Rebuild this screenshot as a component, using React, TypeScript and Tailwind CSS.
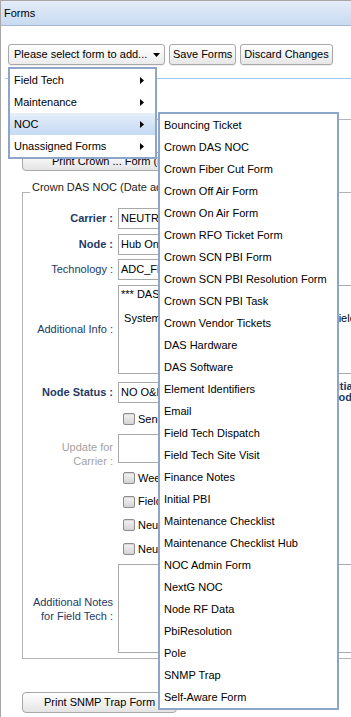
import React from "react";

const FONT = "font-['Liberation_Sans',Arial,Helvetica,sans-serif]";
const LABEL = "text-[#1e3a64]";

function Btn({ children }: { children: React.ReactNode }) {
  return (
    <div className="flex h-[21px] items-center whitespace-nowrap rounded-[3px] border border-[#a8a8a8] bg-gradient-to-b from-white to-[#e6e6e6] px-[3px] shadow-[0_1px_1px_rgba(0,0,0,0.08)]">
      {children}
    </div>
  );
}

function RightTri() {
  return (
    <svg width="4" height="7" viewBox="0 0 4 7" className="block">
      <path d="M0 0 L4 3.5 L0 7 Z" fill="#000" />
    </svg>
  );
}

function Check() {
  return (
    <div className="h-[12px] w-[12px] shrink-0 rounded-[2px] border border-[#8c8c8c] bg-gradient-to-b from-[#f4f4f4] to-[#d4d4d4] shadow-[inset_0_1px_1px_rgba(0,0,0,0.12)]" />
  );
}

function Row({
  label,
  labelClass = "",
  className = "",
  children,
}: {
  label?: React.ReactNode;
  labelClass?: string;
  className?: string;
  children?: React.ReactNode;
}) {
  return (
    <div className={`flex items-center ${className}`}>
      <div className={`w-[90px] shrink-0 text-right ${labelClass}`}>{label}</div>
      <div className="ml-[5px] flex items-center">{children}</div>
    </div>
  );
}

function Input({ value, w = "w-[200px]" }: { value: string; w?: string }) {
  return (
    <div className={`flex h-[21px] ${w} items-center overflow-hidden whitespace-nowrap border border-[#a9a9a9] bg-white pl-[2px]`}>
      {value}
    </div>
  );
}

function CheckRow({ text, h }: { text: string; h: string }) {
  return (
    <Row className={h}>
      <div className="ml-[5px] flex items-center">
        <Check />
        <span className="ml-[3px] whitespace-nowrap">{text}</span>
      </div>
    </Row>
  );
}

const mainItems = ["Field Tech", "Maintenance", "NOC", "Unassigned Forms"];

const nocItems = [
  "Bouncing Ticket",
  "Crown DAS NOC",
  "Crown Fiber Cut Form",
  "Crown Off Air Form",
  "Crown On Air Form",
  "Crown RFO Ticket Form",
  "Crown SCN PBI Form",
  "Crown SCN PBI Resolution Form",
  "Crown SCN PBI Task",
  "Crown Vendor Tickets",
  "DAS Hardware",
  "DAS Software",
  "Element Identifiers",
  "Email",
  "Field Tech Dispatch",
  "Field Tech Site Visit",
  "Finance Notes",
  "Initial PBI",
  "Maintenance Checklist",
  "Maintenance Checklist Hub",
  "NOC Admin Form",
  "NextG NOC",
  "Node RF Data",
  "PbiResolution",
  "Pole",
  "SNMP Trap",
  "Self-Aware Form",
];

export default function App() {
  return (
    <div className={`relative h-[717px] w-[351px] overflow-hidden bg-white text-[11px] leading-[13px] text-black ${FONT}`}>
      <div className="h-full border-l border-t border-[#a6a6a6]">
        {/* header */}
        <div className="flex h-[25px] items-center border-b border-[#a4b8d2] bg-gradient-to-b from-[#e4edf9] to-[#c8daf1] pl-[3px]">
          Forms
        </div>

        {/* toolbar */}
        <div className="flex gap-[4px] pl-[7px] pt-[18px]">
          <div className="flex h-[21px] w-[157px] items-center justify-between rounded-[3px] border border-[#a8a8a8] bg-gradient-to-b from-white to-[#ebebeb] pl-[5px] pr-[4px] shadow-[0_1px_1px_rgba(0,0,0,0.08)]">
            <span className="whitespace-nowrap">Please select form to add...</span>
            <svg width="7" height="4" viewBox="0 0 7 4" className="block">
              <path d="M0 0 L7 0 L3.5 4 Z" fill="#000" />
            </svg>
          </div>
          <Btn>Save Forms</Btn>
          <Btn>Discard Changes</Btn>
        </div>

        {/* tab strip line */}
        <div className="ml-[4px] mt-[13px] border-b border-[#9fcaf1]" />
        <div className="ml-[12px] mt-[40px] border-t border-[#b5b5b5]" />

        {/* print crown button */}
        <div className="ml-[21px] mt-[32px] flex">
          <div className="flex h-[19px] items-center whitespace-nowrap rounded-[4px] border border-[#a8a8a8] bg-gradient-to-b from-white to-[#e4e4e4] pl-[29px] pr-[29px]">
            Print Crown ... Form (Date added)
          </div>
        </div>

        {/* fieldset */}
        <fieldset className="ml-[21px] mt-[10px] w-[700px] border border-[#b3b3b3] pb-[5px]">
          <legend className="ml-[7px] px-[2px] pb-[10px] leading-[13px] text-[#222]">
            Crown DAS NOC (Date added: 02/14/2013)
          </legend>

          <Row label="Carrier :" labelClass={`font-bold ${LABEL}`} className="mt-[4px]">
            <Input value="NEUTRAL NET" />
          </Row>
          <Row label="Node :" labelClass={`font-bold ${LABEL}`} className="mt-[5px]">
            <Input value="Hub One - Main" />
          </Row>
          <Row label="Technology :" labelClass={LABEL} className="mt-[4px]">
            <Input value="ADC_Flexwave" />
          </Row>
          <Row label="Additional Info :" labelClass={LABEL} className="mt-[5px]">
            <div className="h-[89px] w-[400px] overflow-hidden whitespace-pre border border-[#a9a9a9] pl-[2px] pt-[2px] leading-[12px]">
              {"*** DAS NOC Ticket ***\n\n System generated notes for the local DAS Field Tech"}
            </div>
          </Row>
          <Row label="Node Status :" labelClass={`font-bold ${LABEL}`} className="mt-[7px]">
            <Input value="NO O&M" />
            <div className={`ml-[9px] whitespace-nowrap font-bold leading-[11px] ${LABEL}`}>
              Initial
              <br />
              Prod Date :
            </div>
          </Row>
          <CheckRow text="Send Update to Carrier" h="mt-[4px] h-[24px]" />
          <Row
            label={
              <>
                Update for
                <br />
                Carrier :
              </>
            }
            labelClass="text-[#a3a3a3] leading-[14px] pt-[11px]"
            className="mt-[3px] h-[29px]"
          >
            <div className="h-[29px] w-[200px] border border-[#a9a9a9]" />
          </Row>
          <CheckRow text="Weekend Work" h="mt-[3px] h-[24px]" />
          <CheckRow text="Field Tech Dispatched" h="h-[23px]" />
          <CheckRow text="Neutral Host Notified" h="h-[24px]" />
          <CheckRow text="Neutral Host Approved" h="h-[24px]" />
          <Row
            label={
              <>
                Additional Notes
                <br />
                for Field Tech :
              </>
            }
            labelClass={`leading-[14px] ${LABEL}`}
            className="mt-[3px]"
          >
            <div className="h-[89px] w-[400px] border border-[#a9a9a9]" />
          </Row>
        </fieldset>

        {/* print snmp */}
        <div className="ml-[21px] mt-[33px] flex">
          <div className="flex h-[21px] items-center whitespace-nowrap rounded-[4px] border border-[#a8a8a8] bg-gradient-to-b from-white to-[#e4e4e4] px-[21px]">
            Print SNMP Trap Form
          </div>
        </div>
      </div>

      {/* main dropdown menu */}
      <div className="absolute left-[8px] top-[67px] w-[149px] border-2 border-[#8ca5c8] bg-white">
        {mainItems.map((it) => (
          <div
            key={it}
            className={`flex h-[22px] items-center justify-between pl-[4px] pr-[11px] ${
              it === "NOC" ? "bg-gradient-to-b from-[#e6effb] to-[#c4d9f3]" : ""
            }`}
          >
            <span className="whitespace-nowrap">{it}</span>
            <RightTri />
          </div>
        ))}
      </div>

      {/* NOC submenu */}
      <div className="absolute left-[158px] top-[112px] w-[181px] border-2 border-[#8ca5c8] bg-white">
        {nocItems.map((it) => (
          <div key={it} className="flex h-[22px] items-center whitespace-nowrap pl-[4px]">
            {it}
          </div>
        ))}
      </div>
    </div>
  );
}
